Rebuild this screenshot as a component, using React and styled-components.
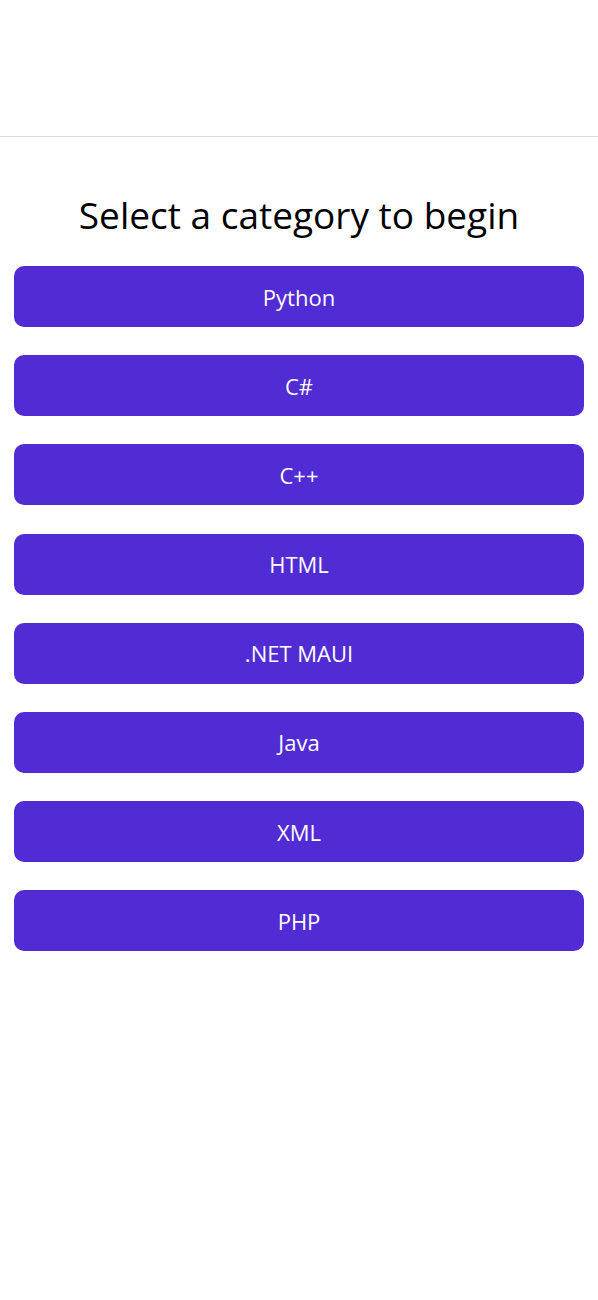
import styled, { createGlobalStyle } from 'styled-components';

const GlobalStyle = createGlobalStyle`
  body {
    margin: 0;
    background: #ffffff;
    font-family: "Open Sans", "Noto Sans", sans-serif;
  }
`;

const Page = styled.div`
  display: flex;
  flex-direction: column;
  min-height: 1300px;
  background: #ffffff;
`;

const TopBar = styled.div`
  height: 136px;
  border-bottom: 1px solid #dcdcdc;
`;

const Content = styled.div`
  display: flex;
  flex-direction: column;
  align-items: center;
  padding: 0 14px;
`;

const Title = styled.h1`
  margin: 51px 0 24px;
  font-size: 37px;
  font-weight: 400;
  color: #000000;
  text-align: center;
  line-height: 54px;
`;

const List = styled.div`
  display: flex;
  flex-direction: column;
  gap: 28.2px;
  width: 100%;
`;

const CategoryButton = styled.button`
  height: 61px;
  width: 100%;
  border: none;
  border-radius: 10px;
  background: #512bd4;
  color: #ffffff;
  font-family: "Open Sans", "Noto Sans", sans-serif;
  font-size: 22px;
  cursor: pointer;
`;

const categories = ['Python', 'C#', 'C++', 'HTML', '.NET MAUI', 'Java', 'XML', 'PHP'];

const App = () => (
  <Page>
    <GlobalStyle />
    <TopBar />
    <Content>
      <Title>Select a category to begin</Title>
      <List>
        {categories.map((name) => (
          <CategoryButton key={name}>{name}</CategoryButton>
        ))}
      </List>
    </Content>
  </Page>
);

export default App;
